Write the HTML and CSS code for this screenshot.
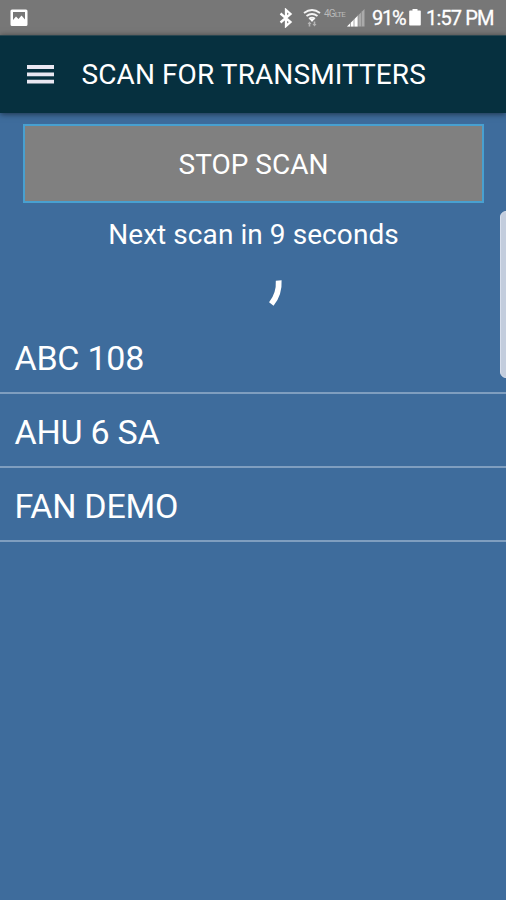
FILE: index.html
```html
<!DOCTYPE html>
<html lang="en">
<head>
<meta charset="utf-8">
<title>Scan for Transmitters</title>
<link rel="stylesheet" href="styles.css">
</head>
<body>
<div class="screen">
  <div class="status">
    <svg class="picture" width="18" height="18" viewBox="0 0 18 18"><path fill="#fff" fill-rule="evenodd" d="M2 .5h14a1.500 1.500 0 0 1 1.500 1.500v13.500a1.500 1.500 0 0 1-1.500 1.500H2a1.500 1.500 0 0 1-1.500-1.500V2A1.500 1.500 0 0 1 2 .5zM3 3v8l3-3.500 2.500 2.500 3-3.500 3.500 4V3z"/></svg>
    <svg class="bluetooth" width="14" height="20" viewBox="0 0 14 20"><path fill="none" stroke="#fff" stroke-width="2.300" d="M1.500 5.500l10 8.500-4.500 4V2l4.500 4-10 8.500"/></svg>
    <svg class="wifi" width="18" height="20" viewBox="0 0 18 20"><g fill="none" stroke="#f4f4f4" stroke-width="1.900"><path d="M1 5q8-6 16 0M3.500 8q5.500-4 11 0M6 10.700q3-2 6 0"/></g><path fill="#fff" d="M6.500 11h5L9 14z"/><path fill="#b5b5b5" d="M4.500 16l2-2.500 2 2.500h-1.200v2.500H5.700V16zM9.500 16h1.200v-2.500h1.600V16h1.200l-2 2.500z"/></svg>
    <span class="lte">4G<small>LTE</small></span>
    <svg class="signal" width="18" height="18" viewBox="0 0 18 18"><path fill="#aaa" d="M17.500 0v17.500H0z"/><path fill="#fff" d="M11 6.500v11H0z"/><path stroke="#858585" stroke-width=".7" d="M3.500 13v5M7 9v9M11 5v13M14.500 2v16"/></svg>
    <span class="percent">91%</span>
    <svg class="battery" width="12" height="17" viewBox="0 0 12 17"><path fill="#fff" d="M3.500 0h5v1.500H11a.8.8 0 0 1 .8.8v13.500a.8.8 0 0 1-.8.8H1a.8.8 0 0 1-.8-.8V2.300A.8.8 0 0 1 1 1.500h2.500z"/></svg>
    <span class="clock">1:57 PM</span>
  </div>
  <header class="bar">
    <svg class="menu" width="27" height="20" viewBox="0 0 27 20"><path stroke="#e9e7f2" stroke-width="3.800" d="M0 2h27M0 9.300h27M0 16.600h27"/></svg>
    <h1>SCAN FOR TRANSMITTERS</h1>
  </header>
  <main>
    <button class="stop"><span>STOP SCAN</span></button>
    <p class="next"><span>Next scan in 9 seconds</span></p>
    <div class="progress"><svg width="60" height="60" viewBox="0 0 60 60"><path fill="none" stroke="#fff" stroke-width="5.800" d="M55.700 28.500Q56.500 42 48.300 52"/></svg></div>
    <ul class="list">
      <li><span class="abc">ABC 108</span></li>
      <li><span class="ahu">AHU 6 SA</span></li>
      <li><span class="fan">FAN DEMO</span></li>
    </ul>
  </main>
  <div class="edge"></div>
</div>
</body>
</html>
```
FILE: styles.css
```css
* { box-sizing: border-box; }
body { margin: 0; background: #3e6c9c; font-family: Roboto, sans-serif; color: #fff; }
.screen { position: relative; width: 506px; height: 900px; overflow: hidden; background: #3e6c9c; }
.status { display: flex; align-items: center; height: 35px; padding: 0 10px; background: #777; font-size: 20px; white-space: nowrap; }
.picture { margin-right: auto; }
.bluetooth { margin-right: 10px; }
.wifi { margin-right: 3px; }
.lte { display: flex; align-items: baseline; width: 20px; margin: -6px 3px 0 0; font-size: 10px; line-height: 10px; letter-spacing: -.8px; color: #b9b9b9; }
.lte small { font-size: 8px; letter-spacing: -.8px; }
.signal { margin-right: 7px; }
.percent { width: 33px; margin-right: 4px; letter-spacing: -1.300px; -webkit-text-stroke: .3px #fff; }
.battery { margin-right: 5px; }
.clock { width: 70px; letter-spacing: -.85px; -webkit-text-stroke: .3px #fff; }
.bar { position: relative; display: flex; align-items: center; height: 78px; padding: 0 27px; background: #06303f; border-top: 1px solid #294650; box-shadow: 0 1px 6px rgba(0, 0, 0, .55); }
.menu { margin-right: 27.500px; }
h1 { margin: 0; font-size: 28px; line-height: 34px; font-weight: 400; letter-spacing: .1px; white-space: nowrap; }
main { padding-top: 11px; }
.stop { display: flex; align-items: center; justify-content: center; width: 461px; height: 79px; margin: 0 0 0 23px; padding: 2px 0 0; border: 2px solid #48a0d0; background: #808080; color: #fff; font: 28px Roboto, sans-serif; }
.next { margin: 15px 0 0; padding-left: 1px; text-align: center; font-size: 28px; line-height: 34px; letter-spacing: .07px; }
.progress { display: flex; justify-content: center; height: 60px; }
.list { margin: 8px 0 0; padding: 0; list-style: none; }
.list li { display: flex; align-items: center; height: 74px; padding: 4px 14.500px 0; border-bottom: 2px solid #7f9ebf; font-size: 34px; line-height: 40px; letter-spacing: -.25px; }
.edge { position: absolute; top: 211px; right: -6px; width: 12px; height: 167px; border-radius: 8px; background: #c3cddd; border: 1px solid #d7deeb; }
```
